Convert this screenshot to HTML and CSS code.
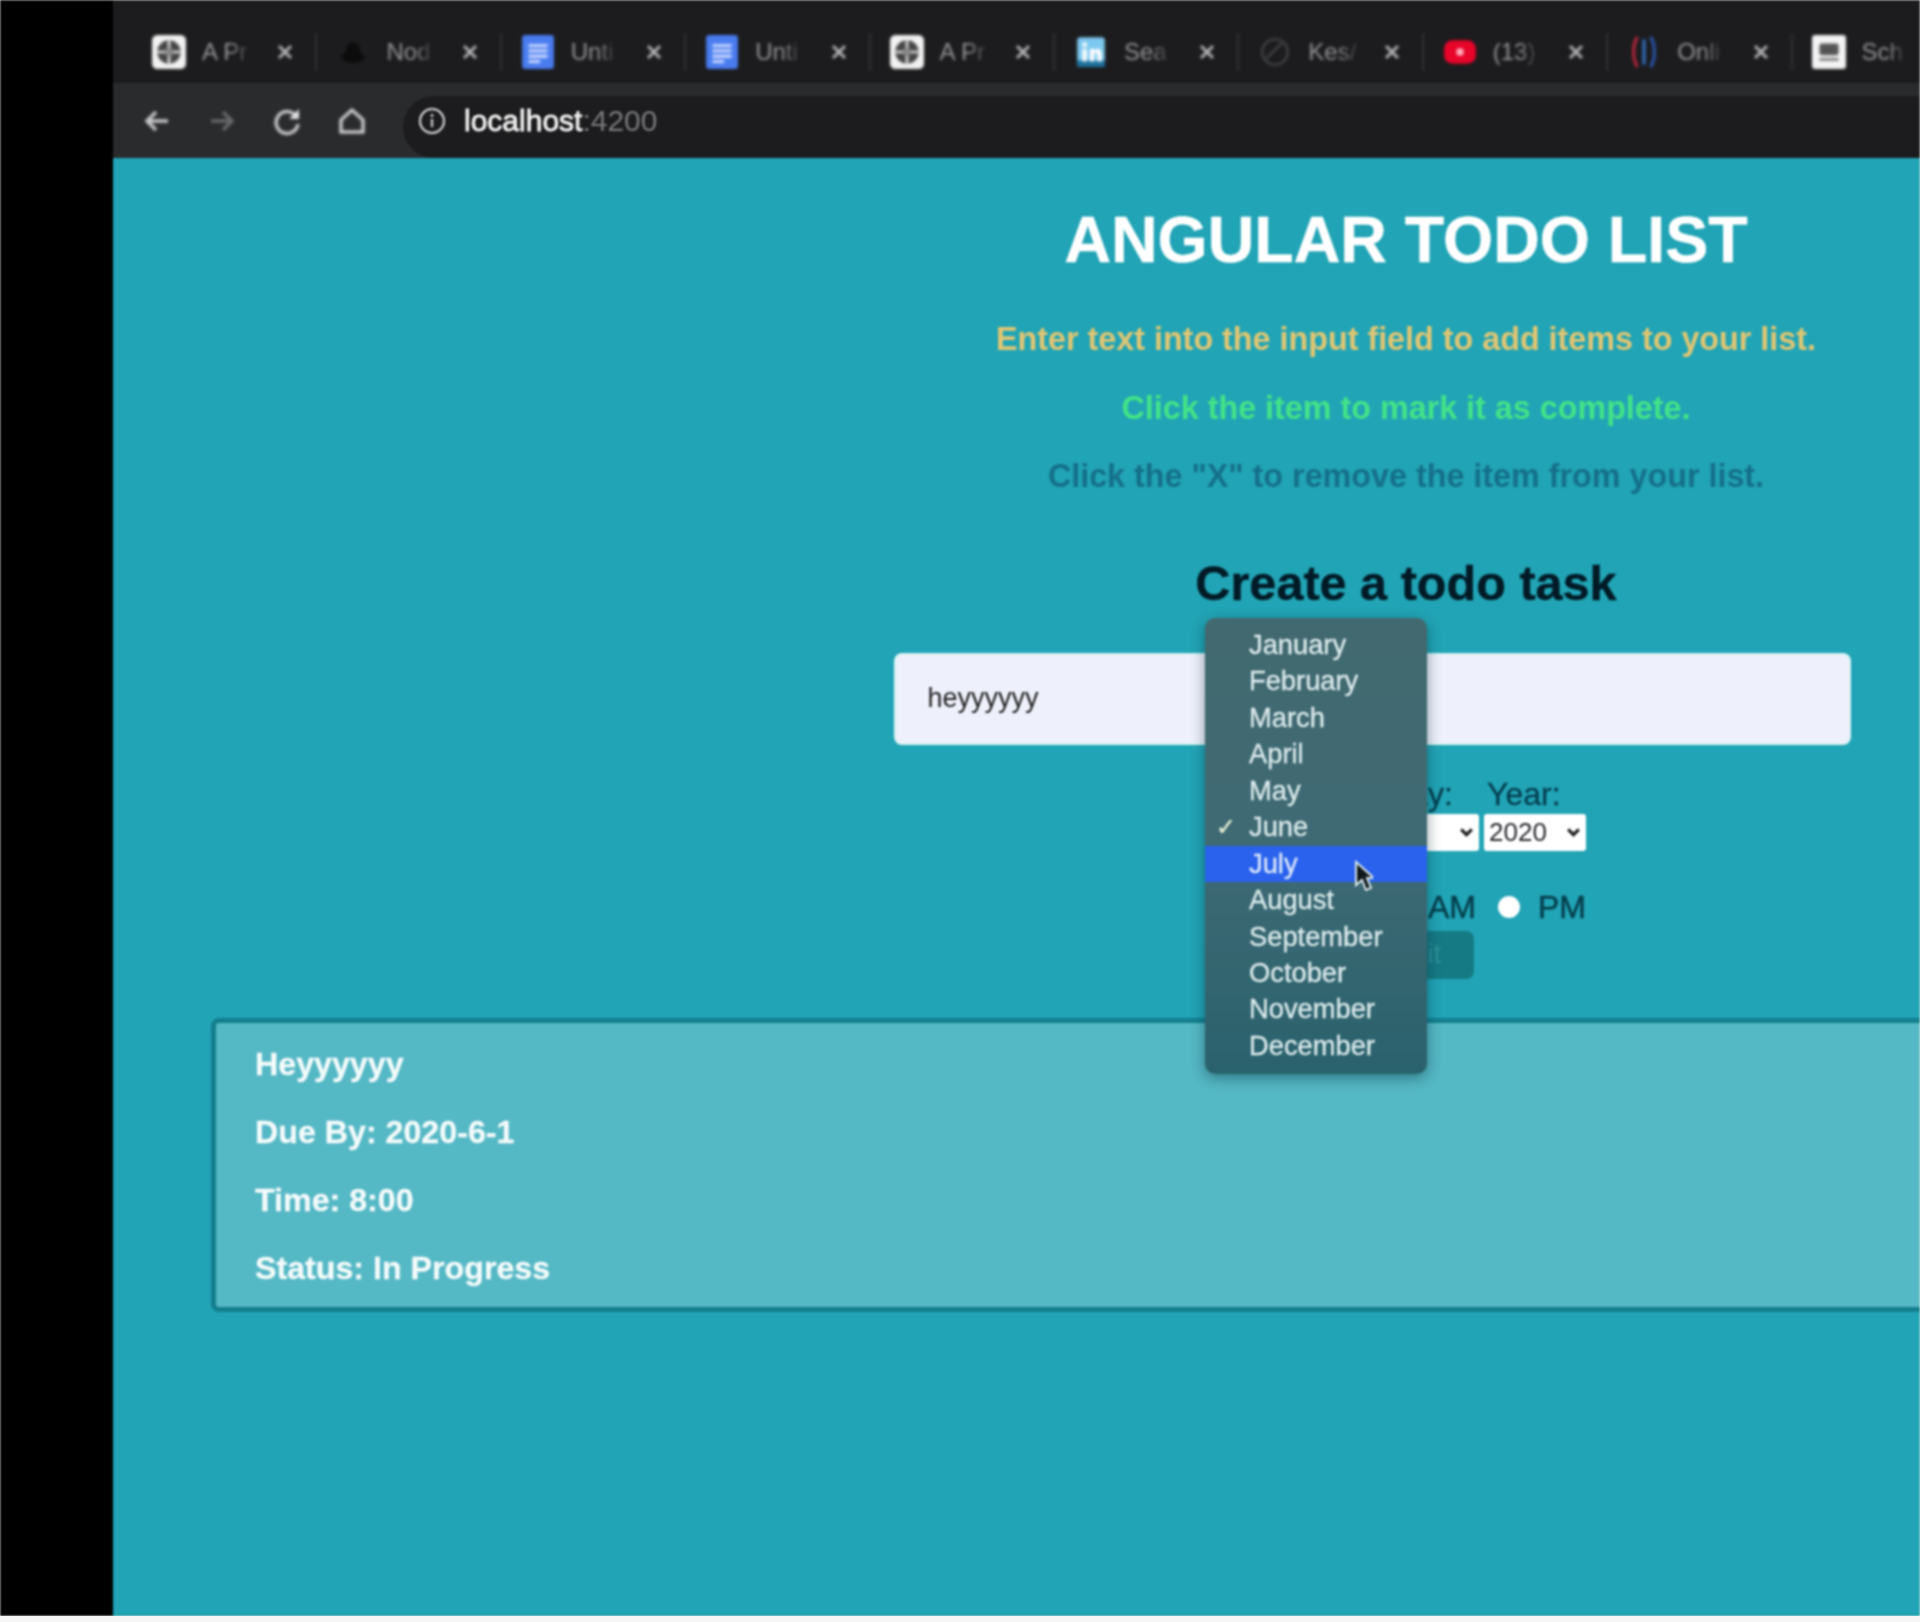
FILE: index.html
```html
<!DOCTYPE html>
<html>
<head>
    <title>Angular Todo List</title>
    <link rel="stylesheet" href="styles.css">
</head>
<body>
    <div class="screen">
        <div class="side"></div>
        <div class="browser">
            <div class="tabs">
                <div class="tab">
                    <svg class="favicon" viewBox="0 0 32 32"><rect width="32" height="32" rx="5" fill="#f2f2f2"/><circle cx="16" cy="16" r="11" fill="#444"/><path d="M16 5v22M5 16h22" stroke="#ddd" stroke-width="2.5"/><circle cx="16" cy="16" r="4" fill="#888"/></svg>
                    <span class="tab-title">A Pr</span>
                    <svg class="close" viewBox="0 0 18 18"><path d="M3 3l12 12M15 3L3 15"/></svg>
                </div>
                <div class="tab">
                    <svg class="favicon" viewBox="0 0 32 32"><path d="M9 18c0-8 3-11 7-11s7 3 7 11z" fill="#0c0c0c"/><ellipse cx="16" cy="21" rx="11" ry="5" fill="#0c0c0c"/></svg>
                    <span class="tab-title">Nod</span>
                    <svg class="close" viewBox="0 0 18 18"><path d="M3 3l12 12M15 3L3 15"/></svg>
                </div>
                <div class="tab">
                    <svg class="favicon" viewBox="0 0 32 32"><rect x="1" width="30" height="32" rx="3" fill="#4a7cf0"/><path d="M7 10h18M7 15h18M7 20h18M7 25h11" stroke="#d6e2ff" stroke-width="2.6"/></svg>
                    <span class="tab-title">Unti</span>
                    <svg class="close" viewBox="0 0 18 18"><path d="M3 3l12 12M15 3L3 15"/></svg>
                </div>
                <div class="tab">
                    <svg class="favicon" viewBox="0 0 32 32"><rect x="1" width="30" height="32" rx="3" fill="#4a7cf0"/><path d="M7 10h18M7 15h18M7 20h18M7 25h11" stroke="#d6e2ff" stroke-width="2.6"/></svg>
                    <span class="tab-title">Unti</span>
                    <svg class="close" viewBox="0 0 18 18"><path d="M3 3l12 12M15 3L3 15"/></svg>
                </div>
                <div class="tab">
                    <svg class="favicon" viewBox="0 0 32 32"><rect width="32" height="32" rx="5" fill="#f2f2f2"/><circle cx="16" cy="16" r="11" fill="#444"/><path d="M16 5v22M5 16h22" stroke="#ddd" stroke-width="2.5"/><circle cx="16" cy="16" r="4" fill="#888"/></svg>
                    <span class="tab-title">A Pr</span>
                    <svg class="close" viewBox="0 0 18 18"><path d="M3 3l12 12M15 3L3 15"/></svg>
                </div>
                <div class="tab">
                    <svg class="favicon" viewBox="0 0 32 32"><rect x="3" y="2" width="26" height="28" rx="3" fill="#7cc8ee"/><rect x="3" y="24" width="26" height="6" fill="#1c6f9c"/><path d="M8 13h4v12H8zM8 7h4v4H8zM15 13h4v2c2-3 7-3 7 3v7h-4v-6c0-3-3-3-3 0v6h-4z" fill="#fff"/></svg>
                    <span class="tab-title">Sea</span>
                    <svg class="close" viewBox="0 0 18 18"><path d="M3 3l12 12M15 3L3 15"/></svg>
                </div>
                <div class="tab">
                    <svg class="favicon" viewBox="0 0 32 32"><circle cx="16" cy="16" r="12" fill="none" stroke="#3f4042" stroke-width="2.5"/><path d="M8 22L22 8" stroke="#3f4042" stroke-width="2.5"/></svg>
                    <span class="tab-title">Kes/</span>
                    <svg class="close" viewBox="0 0 18 18"><path d="M3 3l12 12M15 3L3 15"/></svg>
                </div>
                <div class="tab">
                    <svg class="favicon" viewBox="0 0 32 32"><rect x="1" y="5" width="30" height="22" rx="8" fill="#e8042a"/><circle cx="16" cy="16" r="3.5" fill="#ffb3c0"/></svg>
                    <span class="tab-title">(13)</span>
                    <svg class="close" viewBox="0 0 18 18"><path d="M3 3l12 12M15 3L3 15"/></svg>
                </div>
                <div class="tab">
                    <svg class="favicon" viewBox="0 0 32 32"><path d="M10 2C5 8 5 24 10 30" fill="none" stroke="#b3263c" stroke-width="3"/><path d="M22 2c5 6 5 22 0 28" fill="none" stroke="#2a55a8" stroke-width="3"/><path d="M16 4v24" stroke="#2f6fc0" stroke-width="3"/></svg>
                    <span class="tab-title">Onli</span>
                    <svg class="close" viewBox="0 0 18 18"><path d="M3 3l12 12M15 3L3 15"/></svg>
                </div>
                <div class="tab">
                    <svg class="favicon" viewBox="0 0 32 32"><rect width="32" height="32" rx="3" fill="#f4f4f4"/><rect x="7" y="8" width="18" height="11" rx="2" fill="#555"/><path d="M7 23h18" stroke="#777" stroke-width="2.5"/></svg>
                    <span class="tab-title">Sch</span>
                </div>
            </div>

            <div class="toolbar">
                <div class="nav-icons">
                    <svg class="nav-icon" viewBox="0 0 30 30"><path d="M26 15H6M14 6l-9 9 9 9"/></svg>
                    <svg class="nav-icon dim" viewBox="0 0 30 30"><path d="M4 15h20M16 6l9 9-9 9"/></svg>
                    <svg class="nav-icon" viewBox="0 0 30 30"><path d="M24 10a11 11 0 1 0 2 8"/><path class="fill" d="M27 3v10H17z"/></svg>
                    <svg class="nav-icon" viewBox="0 0 30 30"><path d="M15 4L4 14v12h22V14z"/></svg>
                </div>
                <div class="address">
                    <svg class="info" viewBox="0 0 28 28"><circle cx="14" cy="14" r="12"/><path d="M14 12v8M14 7v3"/></svg>
                    <span class="host">localhost<span class="port">:4200</span></span>
                </div>
            </div>

            <div class="page">
                <h1 class="title">ANGULAR TODO LIST</h1>
                <p class="hint hint-yellow">Enter text into the input field to add items to your list.</p>
                <p class="hint hint-green">Click the item to mark it as complete.</p>
                <p class="hint hint-dark">Click the "X" to remove the item from your list.</p>

                <h2 class="form-title">Create a todo task</h2>
                <input class="task-input" type="text" value="heyyyyyy" />

                <div class="date-row">
                    <div class="field field-month">
                        <span class="field-label"></span>
                        <div class="select"></div>
                    </div>
                    <div class="field field-day">
                        <span class="field-label">Day:</span>
                        <div class="select">1<svg class="chevron" viewBox="0 0 14 10"><path d="M2 2l5 5 5-5"/></svg></div>
                    </div>
                    <div class="field field-year">
                        <span class="field-label">Year:</span>
                        <div class="select">2020<svg class="chevron" viewBox="0 0 14 10"><path d="M2 2l5 5 5-5"/></svg></div>
                    </div>
                </div>

                <div class="time-row">
                    <input class="radio" type="radio" name="ampm" />
                    <span class="radio-label">AM</span>
                    <input class="radio" type="radio" name="ampm" />
                    <span class="radio-label">PM</span>
                </div>

                <button class="add-btn">Submit</button>

                <div class="task-card">
                    <p>Heyyyyyy</p>
                    <p>Due By: 2020-6-1</p>
                    <p>Time: 8:00</p>
                    <p>Status: In Progress</p>
                </div>

                <ul class="month-menu">
                    <li>January</li>
                    <li>February</li>
                    <li>March</li>
                    <li>April</li>
                    <li>May</li>
                    <li class="checked">June</li>
                    <li class="active">July</li>
                    <li>August</li>
                    <li>September</li>
                    <li>October</li>
                    <li>November</li>
                    <li>December</li>
                </ul>
                <svg class="cursor" viewBox="0 0 20 32"><path d="M3 2v23l6-5 4 10 5-2-4-10h7z"/></svg>
            </div>
        </div>
    </div>
</body>
</html>
```

FILE: styles.css
```css
body {
    margin: 0;
    background-color: #f6f6f6;
    font-family: "Liberation Sans", Arial, sans-serif;
    overflow: hidden;
}

.screen {
    display: flex;
    height: 1616px;
    overflow: hidden;
    background-color: #000;
    filter: blur(1px);
}
.side {
    flex: 0 0 113px;
}
.browser {
    flex: 1;
    min-width: 0;
    display: flex;
    flex-direction: column;
    overflow: hidden;
}

/* tab strip */
.tabs {
    flex: 0 0 63px;
    padding: 20px 0 0 20px;
    display: flex;
    align-items: center;
    background-color: #1c1c1e;
    overflow: hidden;
}
.tab {
    flex: 0 0 184.4px;
    box-sizing: border-box;
    height: 38px;
    padding: 0 21px 0 19px;
    display: flex;
    align-items: center;
    border-right: 2px solid #333436;
    filter: blur(0.9px);
}
.tab:last-child {
    border-right: none;
}
.favicon {
    flex: none;
    width: 34px;
    height: 34px;
}
.tab-title {
    margin-left: 16px;
    font-size: 24px;
    color: #97979a;
    white-space: nowrap;
    -webkit-mask-image: linear-gradient(90deg, #000 60%, rgba(0, 0, 0, 0.25));
    mask-image: linear-gradient(90deg, #000 60%, rgba(0, 0, 0, 0.25));
}
.close {
    flex: none;
    width: 18px;
    height: 18px;
    margin-left: auto;
    fill: none;
    stroke: #b5b5b7;
    stroke-width: 3;
}

/* address bar row */
.toolbar {
    flex: 0 0 75px;
    display: flex;
    background-color: #2a2b2d;
}
.nav-icons {
    flex: 0 0 290px;
    box-sizing: border-box;
    padding-left: 29px;
    display: flex;
    align-items: center;
    gap: 35px;
    filter: blur(0.8px);
}
.nav-icon {
    width: 30px;
    height: 30px;
    fill: none;
    stroke: #c9c9cb;
    stroke-width: 3.5;
}
.nav-icon .fill {
    fill: #e4e4e6;
    stroke: none;
}
.nav-icon.dim {
    stroke: #68696b;
}
.address {
    flex: 1;
    margin-top: 13px;
    padding: 0 0 13px 15px;
    display: flex;
    align-items: center;
    background-color: #1c1c1e;
    border-radius: 31px 0 0 31px;
}
.info {
    width: 28px;
    height: 28px;
    margin-right: 18px;
    fill: none;
    stroke: #bdbdbf;
    stroke-width: 2.5;
}
.host {
    font-size: 30px;
    color: #f0f0f0;
    -webkit-text-stroke: 0.8px #f0f0f0;
}
.port {
    color: #77787a;
    -webkit-text-stroke: 0;
}

/* the todo page, wider than the visible window */
.page {
    flex: 1;
    position: relative;
    width: 2586px;
    display: flex;
    flex-direction: column;
    align-items: center;
    background-color: #21a4b5;
    border-bottom: 2px solid #129aa8;
    box-sizing: border-box;
}
.title {
    margin: 45px 0 44px;
    font-size: 64.5px;
    line-height: 74px;
    color: #fff;
    -webkit-text-stroke: 0.5px #fff;
}
.hint {
    margin: 0 0 31.5px;
    font-size: 32.3px;
    line-height: 37px;
    font-weight: bold;
}
.hint-yellow {
    color: #e0c673;
}
.hint-green {
    color: #43e388;
}
.hint-dark {
    color: #15708a;
}
.form-title {
    margin: 29px 0 42px;
    font-size: 48.6px;
    line-height: 55px;
    color: #021a26;
    -webkit-text-stroke: 0.4px #021a26;
}
.task-input {
    box-sizing: border-box;
    width: 957px;
    height: 92px;
    margin-right: 68px;
    padding: 0 32px;
    font-family: inherit;
    font-size: 27px;
    color: #222;
    background-color: #eef0fb;
    border: 2px solid #d9f3f6;
    border-radius: 8px;
}

.date-row {
    margin-top: 32px;
    display: flex;
    gap: 5px;
}
.field {
    display: flex;
    flex-direction: column;
    gap: 3px;
}
.field-month {
    width: 160px;
}
.field-day {
    width: 88px;
}
.field-year {
    width: 102px;
}
.field-label {
    height: 34px;
    padding-left: 3px;
    font-size: 32px;
    line-height: 34px;
    color: #053f52;
    -webkit-text-stroke: 0.3px #053f52;
}
.field-day .field-label {
    padding-left: 0;
    margin-left: -4px;
}
.select {
    box-sizing: border-box;
    height: 37px;
    padding: 0 5px;
    display: flex;
    align-items: center;
    justify-content: space-between;
    font-size: 26px;
    color: #2a2a30;
    background-color: #fff;
    border-radius: 3px;
}
.chevron {
    width: 15px;
    height: 11px;
    fill: none;
    stroke: #222;
    stroke-width: 3;
}

.time-row {
    width: 360px;
    margin-top: 38px;
    display: flex;
    align-items: center;
    justify-content: flex-end;
}
.radio {
    appearance: none;
    width: 22px;
    height: 22px;
    margin: 0 18px 0 22px;
    background-color: #fff;
    border-radius: 50%;
}
.radio-label {
    font-size: 32px;
    line-height: 37px;
    color: #06404f;
    -webkit-text-stroke: 0.5px #06404f;
}
.add-btn {
    box-sizing: border-box;
    width: 136px;
    height: 48px;
    margin-top: 5px;
    padding: 0 14px 0 0;
    font-family: inherit;
    font-size: 27px;
    color: #2f9099;
    background-color: #167a85;
    border: none;
    border-radius: 8px;
}

.task-card {
    box-sizing: border-box;
    width: 2390px;
    margin-top: 39px;
    padding: 23px 39px 20px;
    display: flex;
    flex-direction: column;
    gap: 31.3px;
    background-color: #55b8c5;
    border: 5px solid #137f8e;
    border-radius: 8px;
}
.task-card p {
    margin: 0;
    font-size: 32.2px;
    line-height: 37px;
    font-weight: bold;
    color: #f4fbfb;
    -webkit-text-stroke: 0.3px #f4fbfb;
}

/* native month dropdown, open over the form */
.month-menu {
    position: absolute;
    left: 1092px;
    top: 460px;
    box-sizing: border-box;
    width: 222px;
    height: 456px;
    margin: 0;
    padding: 9px 0 0;
    list-style: none;
    background: linear-gradient(180deg, #42696f 0%, #3f6a74 50%, #2a626d 100%);
    border-radius: 10px;
    box-shadow: 0 4px 14px rgba(0, 40, 50, 0.45);
}
.month-menu li {
    position: relative;
    height: 36.45px;
    padding-left: 44px;
    font-size: 27.3px;
    line-height: 36.45px;
    color: #dcecee;
    -webkit-text-stroke: 0.3px #dcecee;
}
.month-menu .active {
    color: #dbe6ff;
    background-color: #2a62ee;
}
.month-menu .checked::before {
    content: "\2713";
    position: absolute;
    left: 11px;
    font-family: "DejaVu Sans", sans-serif;
    font-size: 24px;
    font-weight: bold;
    color: #e6f0c8;
}
.cursor {
    position: absolute;
    left: 1240px;
    top: 702px;
    width: 20px;
    height: 32px;
    fill: #10181c;
    stroke: #d6e6ea;
    stroke-width: 2;
}
```
